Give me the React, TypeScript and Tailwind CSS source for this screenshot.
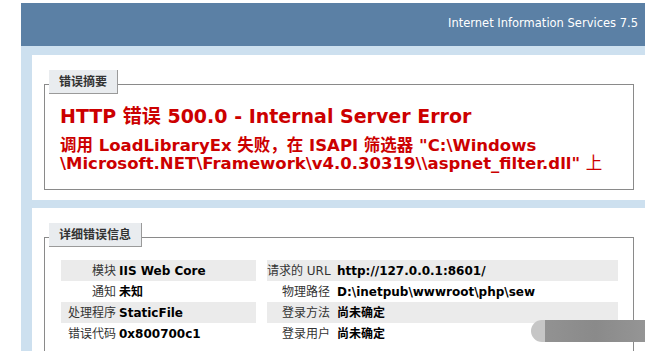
import React from "react";

const font = { fontFamily: '"DejaVu Sans", Verdana, "Noto Sans CJK SC", sans-serif' };

const leftRows = [
  ["模块", "IIS Web Core"],
  ["通知", "未知"],
  ["处理程序", "StaticFile"],
  ["错误代码", "0x800700c1"],
];

const rightRows = [
  ["请求的 URL", "http://127.0.0.1:8601/"],
  ["物理路径", "D:\\inetpub\\wwwroot\\php\\sew"],
  ["登录方法", "尚未确定"],
  ["登录用户", "尚未确定"],
];

const Legend: React.FC<{ children: React.ReactNode }> = ({ children }) => (
  <div className="-mt-[15px] ml-[4px] h-[24px] w-fit bg-[#e9ecef] border-r border-b border-[#9a9a9a] px-[10px] flex items-center text-[12px] font-bold text-[#333]">
    {children}
  </div>
);

const InfoTable: React.FC<{ rows: string[][]; labelW: string; gap: string }> = ({ rows, labelW, gap }) => (
  <div className="flex flex-col">
    {rows.map(([label, value], i) => (
      <div key={label} className={`flex h-[21px] items-center text-[12px] ${i % 2 === 0 ? "bg-[#ebebeb]" : ""}`}>
        <div className={`${labelW} shrink-0 text-right text-[#333] whitespace-nowrap`}>{label}</div>
        <div className={`${gap} font-bold text-black whitespace-nowrap`}>{value}</div>
      </div>
    ))}
  </div>
);

export default function App() {
  return (
    <div className="w-[645px] h-[351px] overflow-hidden bg-white pt-[3px] pl-[21px] relative" style={font}>
      <div className="h-[43px] bg-[#5b80a5] flex items-center justify-end pr-[7px] pb-[2px] text-white text-[11.5px]">
        Internet Information Services 7.5
      </div>
      <div className="bg-[#cde0ef] pl-[11px] pt-[9px] flex flex-col gap-[8px] h-[310px]">
        {/* 错误摘要 */}
        <div className="bg-white h-[145px] shrink-0 pt-[29px] pl-[12px] pr-[11px]">
          <div className="border border-[#8a8a8a] h-[106px]">
            <Legend>错误摘要</Legend>
            <div className="pl-[15px] pt-[10px] text-[#cc0000] font-bold">
              <div className="text-[19px] leading-[24px]">HTTP 错误 500.0 - Internal Server Error</div>
              <div className="text-[16.5px] leading-[18px] mt-[9px]">
                调用 LoadLibraryEx 失败，在 ISAPI 筛选器 "C:\Windows
                <br />
                \Microsoft.NET\Framework\v4.0.30319\\aspnet_filter.dll" <span className="font-normal">上</span>
              </div>
            </div>
          </div>
        </div>
        {/* 详细错误信息 */}
        <div className="bg-white flex-1 min-h-0 pt-[29px] pl-[12px] pr-[11px]">
          <div className="border-t border-l border-r border-[#8a8a8a] h-[200px]">
            <Legend>详细错误信息</Legend>
            <div className="flex gap-[11px] pl-[16px] pt-[13px]">
              <div className="w-[195px]">
                <InfoTable rows={leftRows} labelW="w-[55px]" gap="pl-[3px]" />
              </div>
              <div className="w-[351px]">
                <InfoTable rows={rightRows} labelW="w-[63px]" gap="pl-[7px]" />
              </div>
            </div>
          </div>
        </div>
      </div>
      {/* blurred watermark smudge */}
      <div className="absolute left-[531px] top-[320px] flex h-[22px]">
        <div className="w-[14px] h-full rounded-l-full bg-[#c6c6c6]" />
        <div className="w-[100px] h-full bg-gradient-to-r from-[#929292] via-[#8a8a8a] to-[#959595]" />
      </div>
    </div>
  );
}
